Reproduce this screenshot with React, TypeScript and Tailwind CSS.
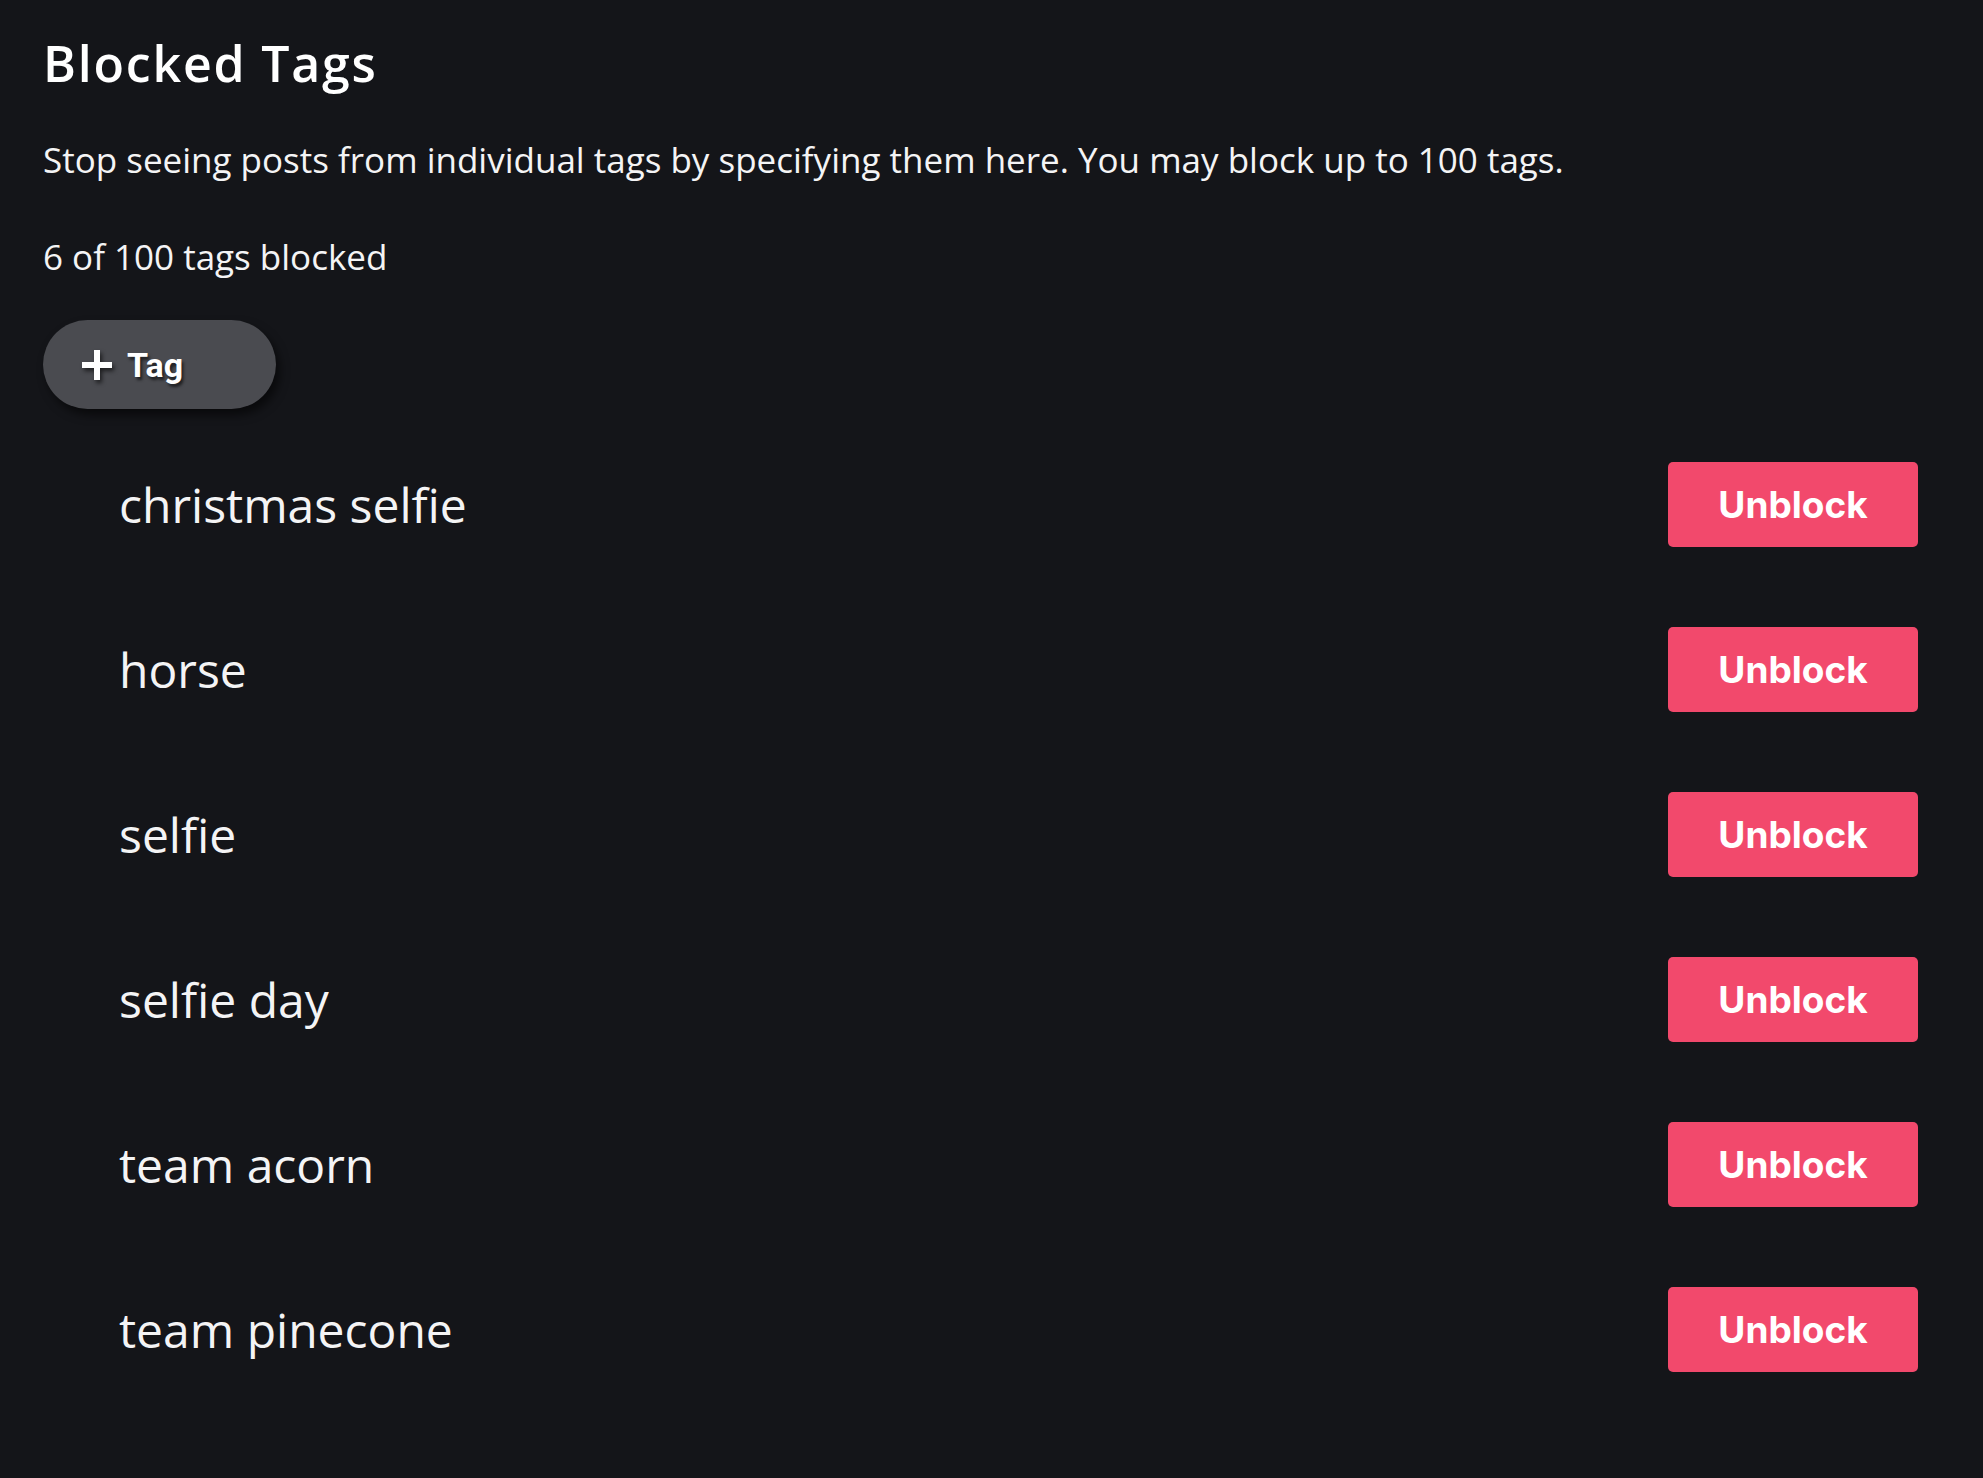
// Blocked tags settings panel
const TAGS = [
  "christmas selfie",
  "horse",
  "selfie",
  "selfie day",
  "team acorn",
  "team pinecone",
];

function PlusIcon() {
  return (
    <svg
      width="30"
      height="30"
      viewBox="0 0 30 30"
      className="drop-shadow-[2px_3px_2px_rgba(0,0,0,0.6)]"
    >
      <rect x="12" y="0" width="6" height="30" fill="#ffffff" />
      <rect x="0" y="12" width="30" height="6" fill="#ffffff" />
    </svg>
  );
}

export default function App() {
  return (
    <div className="min-h-screen w-full bg-[#141519] pl-[43px] pr-[65px] pt-[33px] font-['Open_Sans',sans-serif] text-white">
      <h1 className="text-[50px] font-semibold leading-[60px] tracking-[1.8px]">Blocked Tags</h1>

      <p className="mt-[43px] text-[35px] leading-[48px] text-[#f4f4f5]">
        Stop seeing posts from individual tags by specifying them here. You may block up to 100 tags.
      </p>

      <p className="mt-[49px] text-[35px] leading-[48px] text-[#f4f4f5]">6 of 100 tags blocked</p>

      <button className="mt-[39px] flex h-[89px] w-[233px] items-center gap-[15px] rounded-full bg-[#4a4b50] pl-[39px] shadow-[4px_6px_10px_rgba(0,0,0,0.55)]">
        <PlusIcon />
        <span className="font-['Roboto',sans-serif] text-[34px] font-bold leading-none [text-shadow:2px_3px_3px_rgba(0,0,0,0.6)]">
          Tag
        </span>
      </button>

      <ul className="mt-[13px]">
        {TAGS.map((tag) => (
          <li key={tag} className="flex h-[165px] items-center justify-between pl-[76px]">
            <span className="text-[48px] text-[#f4f4f5]">{tag}</span>
            <button className="flex h-[85px] w-[250px] items-center justify-center rounded-[5px] bg-[#f2496c] font-['Inter',sans-serif] text-[37px] font-bold text-white">
              Unblock
            </button>
          </li>
        ))}
      </ul>
    </div>
  );
}
